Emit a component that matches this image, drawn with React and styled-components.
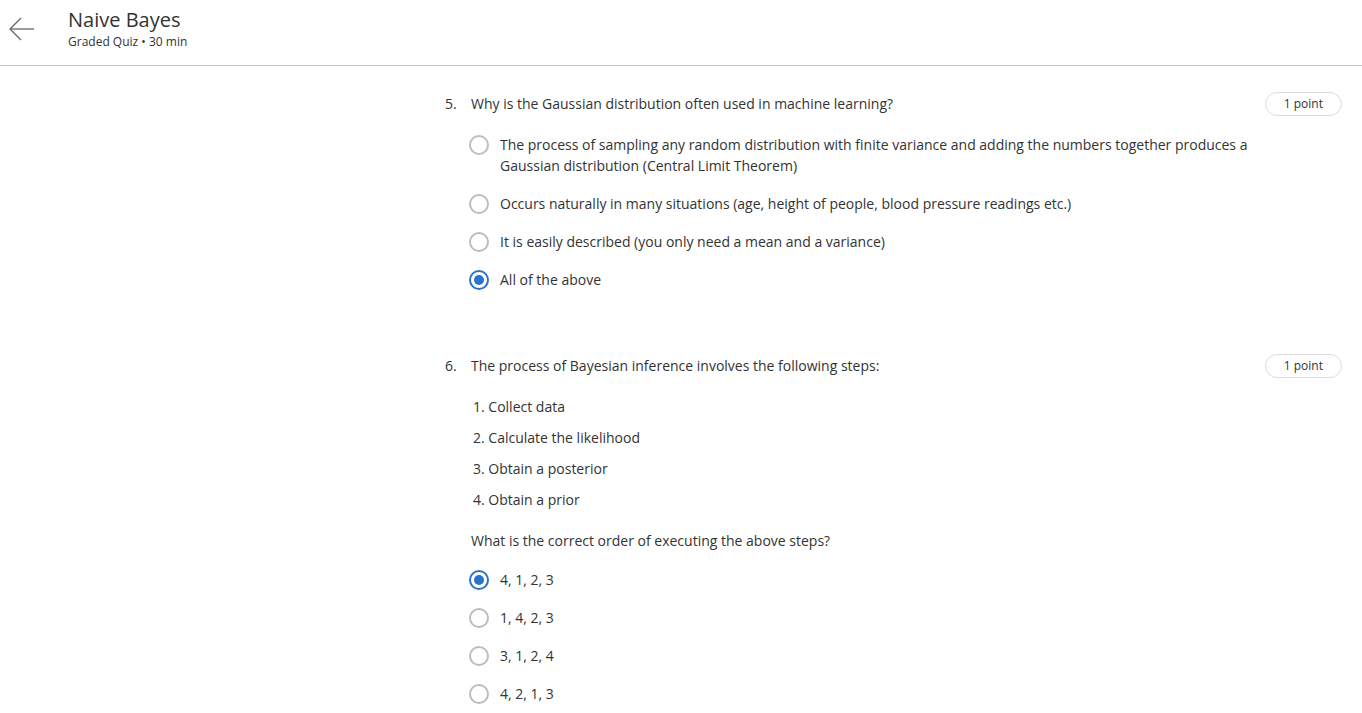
import React from 'react';
import styled, { createGlobalStyle } from 'styled-components';

const GlobalStyle = createGlobalStyle`
  body {
    margin: 0;
    background: #fff;
    font-family: "Open Sans", "Noto Sans", sans-serif;
    color: #333;
  }
`;

const Header = styled.header`
  height: 65px;
  border-bottom: 1px solid #c4c4c4;
  display: flex;
  align-items: flex-start;
  box-sizing: content-box;
`;

const BackButton = styled.button`
  border: 0;
  background: none;
  padding: 0;
  margin: 17px 0 0 9px;
  width: 26px;
  height: 24px;
  display: flex;
  cursor: pointer;
`;

const TitleBlock = styled.div`
  margin-left: 33px;
  padding-top: 6px;
`;

const Title = styled.h1`
  margin: 0;
  font-size: 20px;
  font-weight: 400;
  line-height: 28px;
  color: #333;
`;

const Sub = styled.div`
  font-size: 12px;
  line-height: 16px;
  color: #333;
`;

const Main = styled.main`
  padding: 27px 20px 0 445px;
`;

const Question = styled.section`
  margin-bottom: ${(p) => p.$gap || 0}px;
`;

const QRow = styled.div`
  display: flex;
  align-items: flex-start;
  height: 21px;
  font-size: 14px;
  line-height: 21px;
`;

const Num = styled.span`
  width: 26px;
  flex: none;
`;

const QText = styled.span`
  flex: 1;
`;

const Badge = styled.span`
  flex: none;
  margin-top: -1px;
  border: 1px solid #dcdcdc;
  border-radius: 12px;
  height: 22px;
  padding: 0 18px;
  font-size: 12px;
  line-height: 22px;
  color: #333;
`;

const Body = styled.div`
  padding-left: 24px;
`;

const Steps = styled.ol`
  list-style: none;
  margin: 20px 0 0;
  padding: 0 0 0 28px;
`;

const Step = styled.li`
  font-size: 14px;
  line-height: 21px;
  margin-bottom: 10px;
`;

const Prompt = styled.p`
  margin: 20px 0 0 26px;
  font-size: 14px;
  line-height: 21px;
`;

const Options = styled.div`
  margin-top: ${(p) => p.$top}px;
  display: flex;
  flex-direction: column;
  gap: 17px;
`;

const Option = styled.label`
  display: flex;
  align-items: flex-start;
  font-size: 14px;
  line-height: 21px;
  cursor: pointer;
`;

const Radio = styled.span`
  flex: none;
  width: 20px;
  height: 20px;
  margin-top: 0.5px;
  box-sizing: border-box;
  border-radius: 50%;
  border: 2px solid ${(p) => (p.$checked ? '#2a73cc' : '#bdbdbd')};
  display: flex;
  align-items: center;
  justify-content: center;
  &::after {
    content: '';
    width: 10px;
    height: 10px;
    border-radius: 50%;
    background: ${(p) => (p.$checked ? '#2a73cc' : 'transparent')};
  }
`;

const OptText = styled.span`
  margin-left: 11px;
  max-width: 762px;
`;

const BackArrow = () => (
  <svg width="26" height="24" viewBox="0 0 26 24" fill="none" stroke="#666" strokeWidth="1.3">
    <path d="M1 12 H25" />
    <path d="M12 1 L1 12 L12 23" />
  </svg>
);

const q5 = [
  'The process of sampling any random distribution with finite variance and adding the numbers together produces a Gaussian distribution (Central Limit Theorem)',
  'Occurs naturally in many situations (age, height of people, blood pressure readings etc.)',
  'It is easily described (you only need a mean and a variance)',
  'All of the above',
];

const q6 = ['4, 1, 2, 3', '1, 4, 2, 3', '3, 1, 2, 4', '4, 2, 1, 3'];

const steps = ['1. Collect data', '2. Calculate the likelihood', '3. Obtain a posterior', '4. Obtain a prior'];

const OptionList = ({ items, selected, top }) => (
  <Options $top={top}>
    {items.map((t, i) => (
      <Option key={t}>
        <Radio $checked={i === selected} />
        <OptText>{t}</OptText>
      </Option>
    ))}
  </Options>
);

export default function App() {
  return (
    <>
      <GlobalStyle />
      <Header>
        <BackButton aria-label="Back">
          <BackArrow />
        </BackButton>
        <TitleBlock>
          <Title>Naive Bayes</Title>
          <Sub>Graded Quiz • 30 min</Sub>
        </TitleBlock>
      </Header>
      <Main>
        <Question $gap={65}>
          <QRow>
            <Num>5.</Num>
            <QText>Why is the Gaussian distribution often used in machine learning?</QText>
            <Badge>1 point</Badge>
          </QRow>
          <Body>
            <OptionList items={q5} selected={3} top={20} />
          </Body>
        </Question>
        <Question>
          <QRow>
            <Num>6.</Num>
            <QText>The process of Bayesian inference involves the following steps:</QText>
            <Badge>1 point</Badge>
          </QRow>
          <Steps>
            {steps.map((s) => (
              <Step key={s}>{s}</Step>
            ))}
          </Steps>
          <Prompt>What is the correct order of executing the above steps?</Prompt>
          <Body>
            <OptionList items={q6} selected={0} top={18} />
          </Body>
        </Question>
      </Main>
    </>
  );
}
